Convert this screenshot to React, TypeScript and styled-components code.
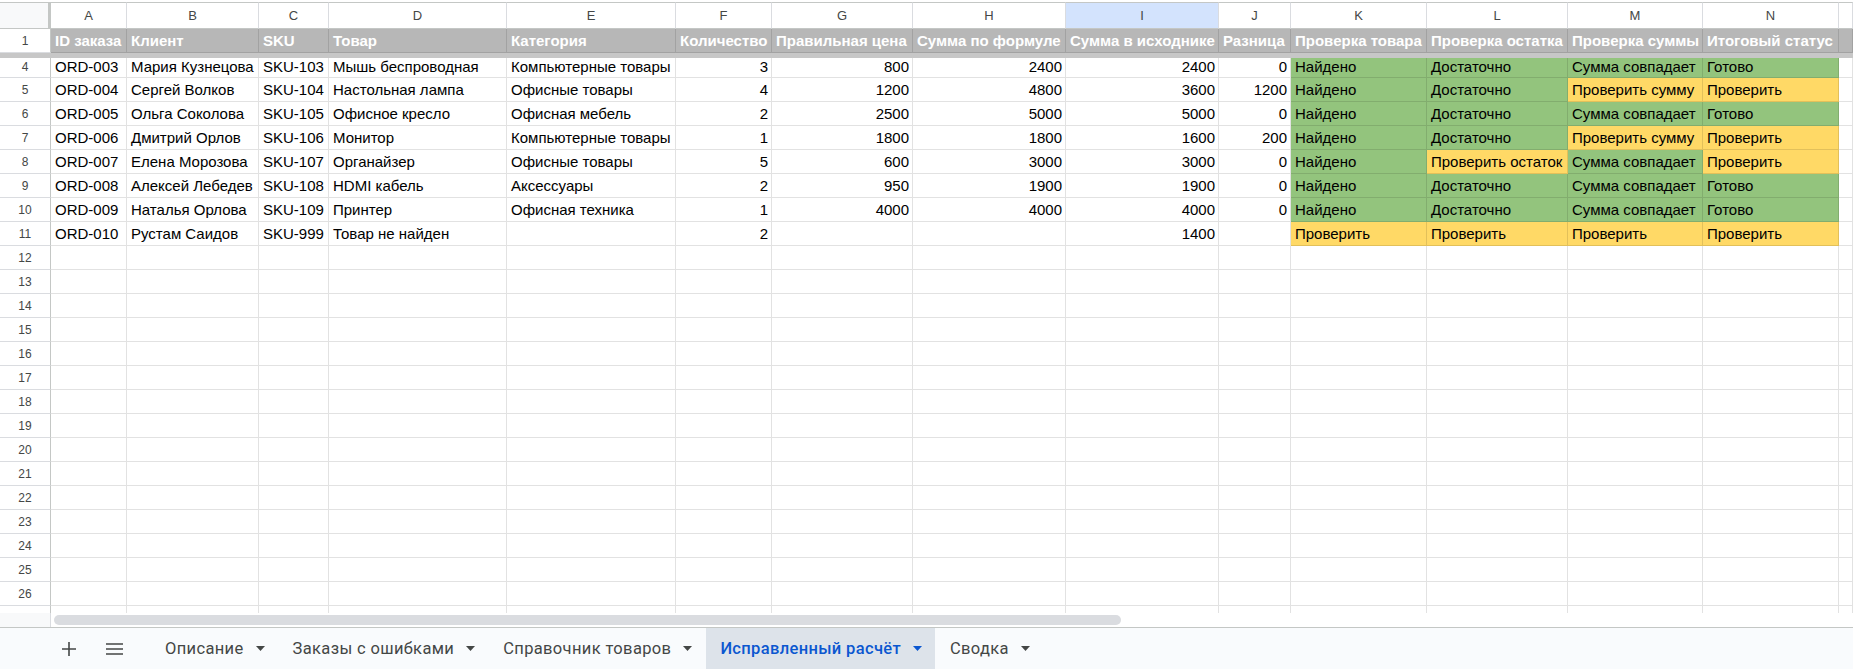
import React from "react";
import styled, { createGlobalStyle } from "styled-components";

/* Column widths of A..N; the O column takes what is left */
const COL_WIDTHS = [76, 132, 70, 178, 169, 96, 141, 153, 153, 72, 136, 141, 135, 136];
const LETTERS = ["A", "B", "C", "D", "E", "F", "G", "H", "I", "J", "K", "L", "M", "N", ""];
const TEMPLATE = `51px ${COL_WIDTHS.map((w) => `${w}px`).join(" ")} 1fr`;
const NUMERIC = new Set([5, 6, 7, 8, 9]);

type Tone = "plain" | "head" | "ok" | "warn";

const TONE_BG: Record<Tone, string> = {
  plain: "#ffffff",
  head: "#b7b7b7",
  ok: "#93c47d",
  warn: "#ffd966",
};

const HEADERS = [
  "ID заказа",
  "Клиент",
  "SKU",
  "Товар",
  "Категория",
  "Количество",
  "Правильная цена",
  "Сумма по формуле",
  "Сумма в исходнике",
  "Разница",
  "Проверка товара",
  "Проверка остатка",
  "Проверка суммы",
  "Итоговый статус",
  "",
];

type Order = {
  n: number;
  cells: string[];
  checks: [string, Tone][];
};

const G: Tone = "ok";
const Y: Tone = "warn";

const ORDERS: Order[] = [
  {
    n: 4,
    cells: ["ORD-003", "Мария Кузнецова", "SKU-103", "Мышь беспроводная", "Компьютерные товары", "3", "800", "2400", "2400", "0"],
    checks: [["Найдено", G], ["Достаточно", G], ["Сумма совпадает", G], ["Готово", G]],
  },
  {
    n: 5,
    cells: ["ORD-004", "Сергей Волков", "SKU-104", "Настольная лампа", "Офисные товары", "4", "1200", "4800", "3600", "1200"],
    checks: [["Найдено", G], ["Достаточно", G], ["Проверить сумму", Y], ["Проверить", Y]],
  },
  {
    n: 6,
    cells: ["ORD-005", "Ольга Соколова", "SKU-105", "Офисное кресло", "Офисная мебель", "2", "2500", "5000", "5000", "0"],
    checks: [["Найдено", G], ["Достаточно", G], ["Сумма совпадает", G], ["Готово", G]],
  },
  {
    n: 7,
    cells: ["ORD-006", "Дмитрий Орлов", "SKU-106", "Монитор", "Компьютерные товары", "1", "1800", "1800", "1600", "200"],
    checks: [["Найдено", G], ["Достаточно", G], ["Проверить сумму", Y], ["Проверить", Y]],
  },
  {
    n: 8,
    cells: ["ORD-007", "Елена Морозова", "SKU-107", "Органайзер", "Офисные товары", "5", "600", "3000", "3000", "0"],
    checks: [["Найдено", G], ["Проверить остаток", Y], ["Сумма совпадает", G], ["Проверить", Y]],
  },
  {
    n: 9,
    cells: ["ORD-008", "Алексей Лебедев", "SKU-108", "HDMI кабель", "Аксессуары", "2", "950", "1900", "1900", "0"],
    checks: [["Найдено", G], ["Достаточно", G], ["Сумма совпадает", G], ["Готово", G]],
  },
  {
    n: 10,
    cells: ["ORD-009", "Наталья Орлова", "SKU-109", "Принтер", "Офисная техника", "1", "4000", "4000", "4000", "0"],
    checks: [["Найдено", G], ["Достаточно", G], ["Сумма совпадает", G], ["Готово", G]],
  },
  {
    n: 11,
    cells: ["ORD-010", "Рустам Саидов", "SKU-999", "Товар не найден", "", "2", "", "", "1400", ""],
    checks: [["Проверить", Y], ["Проверить", Y], ["Проверить", Y], ["Проверить", Y]],
  },
];

const EMPTY_ROWS = Array.from({ length: 16 }, (_, i) => 12 + i);

const TABS = [
  { name: "Описание" },
  { name: "Заказы с ошибками" },
  { name: "Справочник товаров" },
  { name: "Исправленный расчёт", active: true },
  { name: "Сводка" },
];

const GlobalStyle = createGlobalStyle`
  html, body {
    margin: 0;
    padding: 0;
    background: #ffffff;
    overflow: hidden;
  }
  body {
    font-family: "Liberation Sans", Arial, sans-serif;
  }
`;

const Screen = styled.div`
  display: flex;
  flex-direction: column;
  width: 100vw;
  height: 100vh;
  overflow: hidden;
`;

const GridArea = styled.div`
  flex: none;
  height: 613px;
  padding-top: 2px;
  box-sizing: border-box;
  overflow: hidden;
`;

const Row = styled.div<{ $h: number }>`
  display: grid;
  grid-template-columns: ${TEMPLATE};
  height: ${(p) => p.$h}px;
`;

const Corner = styled.div`
  box-sizing: border-box;
  background: #f8f9fa;
  border-top: 1px solid #c4c7c5;
  border-bottom: 1px solid #c4c7c5;
  border-right: 3px solid #c4c7c5;
`;

const ColHead = styled.div<{ $sel?: boolean }>`
  box-sizing: border-box;
  display: flex;
  align-items: center;
  justify-content: center;
  background: ${(p) => (p.$sel ? "#d3e3fd" : "#ffffff")};
  border-top: 1px solid #c4c7c5;
  border-bottom: 1px solid #c4c7c5;
  border-right: 1px solid #dadce0;
  font-size: 13px;
  color: #444746;
`;

const RowNum = styled.div<{ $lift?: boolean }>`
  box-sizing: border-box;
  display: flex;
  align-items: center;
  justify-content: center;
  padding-bottom: ${(p) => (p.$lift ? 2 : 0)}px;
  background: #ffffff;
  border-right: 1px solid #c4c7c5;
  border-bottom: 1px solid #dadce0;
  font-size: 12px;
  color: #444746;
`;

const Cell = styled.div<{ $tone: Tone; $num?: boolean; $lift?: boolean }>`
  box-sizing: border-box;
  display: flex;
  align-items: center;
  justify-content: ${(p) => (p.$num ? "flex-end" : "flex-start")};
  padding: 0 3px ${(p) => (p.$lift ? 2 : 0)}px 4px;
  background: ${(p) => TONE_BG[p.$tone]};
  border-right: 1px solid rgba(0, 0, 0, 0.115);
  border-bottom: 1px solid rgba(0, 0, 0, 0.115);
  font-size: 15px;
  font-weight: ${(p) => (p.$tone === "head" ? 700 : 400)};
  color: ${(p) => (p.$tone === "head" ? "#ffffff" : "#000000")};
  white-space: nowrap;
  overflow: hidden;
`;

const FreezeBar = styled.div`
  height: 5px;
  background: #c7c7c7;
`;

const ScrollStrip = styled.div`
  flex: none;
  display: flex;
  height: 14px;
  background: #ffffff;
`;

const ScrollGutter = styled.div`
  width: 51px;
  box-sizing: border-box;
  background: #f8f9fa;
  border-right: 1px solid #dadce0;
`;

const ScrollThumb = styled.div`
  width: 1067px;
  height: 10px;
  margin: 2px 0 0 3px;
  border-radius: 5px;
  background: #dadce0;
`;

const TabBar = styled.div`
  flex: none;
  display: flex;
  align-items: stretch;
  height: 42px;
  box-sizing: border-box;
  padding-left: 51px;
  border-top: 1px solid #c4c7c5;
  background: #f9fbfd;
`;

const IconButton = styled.button<{ $gap?: number }>`
  width: 36px;
  margin-left: ${(p) => p.$gap ?? 0}px;
  padding: 0;
  border: 0;
  background: transparent;
  display: flex;
  align-items: center;
  justify-content: center;
  color: #444746;
`;

const TabList = styled.div`
  display: flex;
  align-items: stretch;
  gap: 1px;
  margin-left: 19px;
`;

const Tab = styled.div<{ $active?: boolean }>`
  display: flex;
  align-items: center;
  gap: 12px;
  padding: 0 13px 0 14px;
  background: ${(p) => (p.$active ? "#dde3ea" : "transparent")};
  color: ${(p) => (p.$active ? "#0b57d0" : "#444746")};
  font-family: Roboto, "Noto Sans", sans-serif;
  font-size: 16.5px;
  font-weight: ${(p) => (p.$active ? 500 : 400)};
  letter-spacing: 0.35px;
  white-space: nowrap;
`;

const PlusIcon = () => (
  <svg width="14" height="14" viewBox="0 0 14 14" fill="none" stroke="currentColor" strokeWidth="1.6">
    <path d="M7 0v14M0 7h14" />
  </svg>
);

const MenuIcon = () => (
  <svg width="17" height="12" viewBox="0 0 17 12" fill="none" stroke="currentColor" strokeWidth="1.5">
    <path d="M0 1h17M0 6h17M0 11h17" />
  </svg>
);

const Caret = () => (
  <svg width="9" height="5" viewBox="0 0 9 5" fill="currentColor">
    <path d="M0 0h9L4.5 5z" />
  </svg>
);

export default function App() {
  return (
    <Screen>
      <GlobalStyle />
      <GridArea>
        <Row $h={27}>
          <Corner />
          {LETTERS.map((l, i) => (
            <ColHead key={i} $sel={l === "I"}>
              {l}
            </ColHead>
          ))}
        </Row>
        <Row $h={24}>
          <RowNum>1</RowNum>
          {HEADERS.map((h, i) => (
            <Cell key={i} $tone="head">
              {h}
            </Cell>
          ))}
        </Row>
        <FreezeBar />
        {ORDERS.map((o, idx) => {
          const lift = idx === 0;
          return (
            <Row key={o.n} $h={lift ? 20 : 24}>
              <RowNum $lift={lift}>{o.n}</RowNum>
              {o.cells.map((c, i) => (
                <Cell key={i} $tone="plain" $num={NUMERIC.has(i)} $lift={lift}>
                  {c}
                </Cell>
              ))}
              {o.checks.map(([text, tone], i) => (
                <Cell key={`c${i}`} $tone={tone} $lift={lift}>
                  {text}
                </Cell>
              ))}
              <Cell $tone="plain" $lift={lift} />
            </Row>
          );
        })}
        {EMPTY_ROWS.map((n) => (
          <Row key={n} $h={24}>
            <RowNum>{n}</RowNum>
            {LETTERS.map((_, i) => (
              <Cell key={i} $tone="plain" />
            ))}
          </Row>
        ))}
      </GridArea>
      <ScrollStrip>
        <ScrollGutter />
        <ScrollThumb />
      </ScrollStrip>
      <TabBar>
        <IconButton aria-label="Добавить лист">
          <PlusIcon />
        </IconButton>
        <IconButton aria-label="Все листы" $gap={9}>
          <MenuIcon />
        </IconButton>
        <TabList>
          {TABS.map((t) => (
            <Tab key={t.name} $active={t.active}>
              <span>{t.name}</span>
              <Caret />
            </Tab>
          ))}
        </TabList>
      </TabBar>
    </Screen>
  );
}
